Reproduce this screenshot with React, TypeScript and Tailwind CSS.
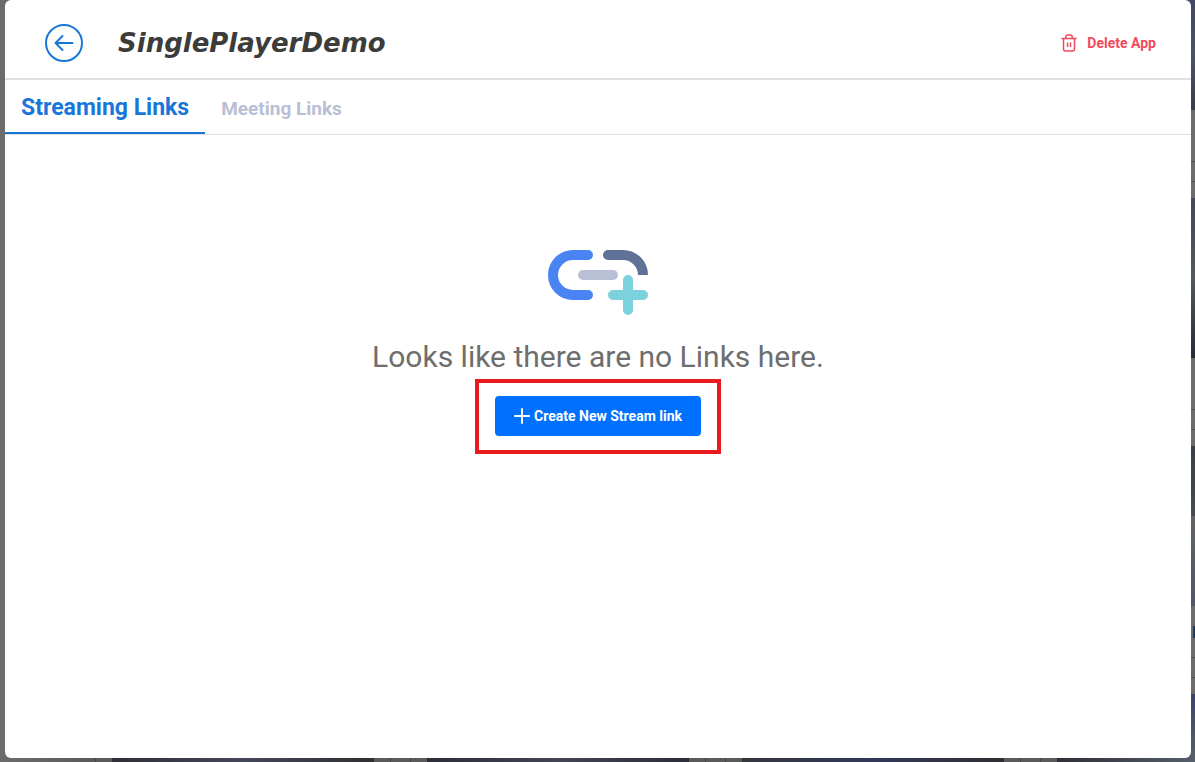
import { useState } from 'react';

const tabs = ['Streaming Links', 'Meeting Links'];

function BackArrow() {
  return (
    <svg className="h-10 w-10" viewBox="0 0 40 40" fill="none" stroke="currentColor" strokeWidth="2" aria-hidden="true">
      <circle cx="20" cy="20" r="18" />
      <path d="M28.5 20H11.5M18.5 13L11.5 20l7 7" strokeLinecap="round" strokeLinejoin="round" />
    </svg>
  );
}

function TrashIcon() {
  return (
    <svg className="h-5 w-4" viewBox="0 0 16 20" fill="none" stroke="currentColor" strokeWidth="1.5" aria-hidden="true">
      <path d="M1 5.5h14" strokeLinecap="round" />
      <path d="M2.5 5.5V16a2 2 0 0 0 2 2h7a2 2 0 0 0 2-2V5.5" />
      <path d="M4.8 5.5V3.7A1.7 1.7 0 0 1 6.5 2h3a1.7 1.7 0 0 1 1.7 1.7v1.8M6.5 9.500v4.500M9.500 9.500v4.500" />
    </svg>
  );
}

function LinkIllustration() {
  return (
    <svg className="h-[65px] w-[100px]" viewBox="0 0 100 65" fill="none" strokeWidth="10" strokeLinecap="round" aria-hidden="true">
      <path d="M40 5H25a20 20 0 0 0 0 40h15" stroke="#4a84f3" />
      <path d="M60 5h15a20 20 0 0 1 20 20" stroke="#5f7196" strokeLinecap="butt" />
      <circle cx="60" cy="5" r="5" fill="#5f7196" stroke="none" />
      <path d="M35 25h30" stroke="#b9bfd4" />
      <path d="M80 30v30M65 45h30" stroke="#7bd2dd" />
    </svg>
  );
}

// Dimmed app list that shows around the edges of the dialog
function Backdrop() {
  return (
    <div className="absolute inset-0 flex flex-col bg-[#6c6c6c]" aria-hidden="true">
      <div className="flex flex-1 justify-end">
        <div className="flex w-3 flex-col">
          <div className="h-[110px] bg-linear-to-b from-[#414765] via-[#4b5368] to-[#393e4b]" />
          <div className="h-[52px] border-b border-[#505050]" />
          <div className="h-5 border-b border-[#505050]" />
          <div className="h-4" />
          <div className="h-[160px] bg-linear-to-b from-[#44485a] via-[#55585d] to-[#272b38]" />
          <div className="h-[52px] border-b border-[#505050]" />
          <div className="h-5 border-b border-[#505050]" />
          <div className="h-4" />
          <div className="h-[70px] bg-linear-to-b from-[#3c3e49] to-[#484b51]" />
          <div className="h-[90px] bg-linear-to-b from-[#626464] to-[#51566a]" />
          <div className="flex h-[52px] items-center justify-end border-b border-[#505050]">
            <span className="h-3 w-0.5 bg-[#203a76]" />
          </div>
          <div className="h-5 border-b border-[#505050]" />
          <div className="h-4" />
          <div className="flex-1 bg-linear-to-b from-[#3c446c] to-[#535d66]" />
        </div>
      </div>
      <div className="flex h-3 bg-[#5b5a5a]">
        <div className="w-24 border-r border-[#454545] bg-linear-to-r from-[#6c6c6c] to-[#5b5a5a]" />
        <div className="w-4" />
        <div className="w-[262px] bg-linear-to-r from-[#302f37] via-[#44475a] to-[#302f31]" />
        <div className="w-[17px] border-r border-[#454545]" />
        <div className="w-5 border-r border-[#454545]" />
        <div className="w-4" />
        <div className="w-[262px] bg-linear-to-r from-[#2b2e37] via-[#424454] to-[#2b2d37]" />
        <div className="w-[17px] border-r border-[#454545]" />
        <div className="w-5 border-r border-[#454545]" />
        <div className="w-4" />
        <div className="w-[262px] bg-linear-to-r from-[#34363d] via-[#33385a] to-[#2f2e30]" />
        <div className="w-[17px] border-r border-[#454545]" />
        <div className="w-5 border-r border-[#454545]" />
        <div className="w-4" />
        <div className="flex-1 bg-linear-to-r from-[#302f37] to-[#555f69]" />
      </div>
    </div>
  );
}

export default function App() {
  const [activeTab, setActiveTab] = useState(tabs[0]);

  return (
    <div className="relative flex min-h-screen pr-1 pb-1 pl-[5px] font-['Roboto',sans-serif]">
      <Backdrop />

      <main className="relative flex flex-1 flex-col rounded-md bg-white">
        {/* Header */}
        <header className="flex h-20 items-center border-b-2 border-[#e0e0e0] pt-2 pr-[35px] pl-[39px]">
          <button type="button" aria-label="Back" className="text-[#1976d9]">
            <BackArrow />
          </button>
          <h1 className="ml-[34px] font-['DejaVu_Sans',sans-serif] text-[26px] leading-8 font-bold text-[#3c3c3b] italic">
            SinglePlayerDemo
          </h1>
          <button type="button" className="ml-auto flex items-center gap-2.5 text-sm font-bold text-[#f14a5c]">
            <TrashIcon />
            Delete App
          </button>
        </header>

        {/* Tabs */}
        <nav role="tablist" className="flex h-[55px] border-b border-[#e0e0e0]">
          {tabs.map((tab) => (
            <button
              key={tab}
              type="button"
              role="tab"
              aria-selected={tab === activeTab}
              onClick={() => setActiveTab(tab)}
              className={
                tab === activeTab
                  ? 'border-b-2 border-[#1976d9] px-4 pt-1 text-[23px] font-bold text-[#1976d9]'
                  : 'px-4 pt-1 text-[19px] font-bold text-[#b9bfd4]'
              }
            >
              {tab}
            </button>
          ))}
        </nav>

        {/* Empty state */}
        <section className="flex flex-col items-center pt-[115px]">
          <LinkIllustration />
          <p className="mt-6 text-3xl font-normal text-[#6e6e6e]">Looks like there are no Links here.</p>
          <div className="mt-1 border-4 border-[#e81c20] px-4 pt-[13px] pb-[14px]">
            <button
              type="button"
              className="flex h-10 w-[206px] items-center justify-center gap-1 rounded bg-[#0070ff] text-sm font-bold text-white"
            >
              <svg className="h-4 w-4" viewBox="0 0 16 16" stroke="currentColor" strokeWidth="2" strokeLinecap="round" aria-hidden="true">
                <path d="M8 1v14M1 8h14" />
              </svg>
              Create New Stream link
            </button>
          </div>
        </section>
      </main>
    </div>
  );
}
